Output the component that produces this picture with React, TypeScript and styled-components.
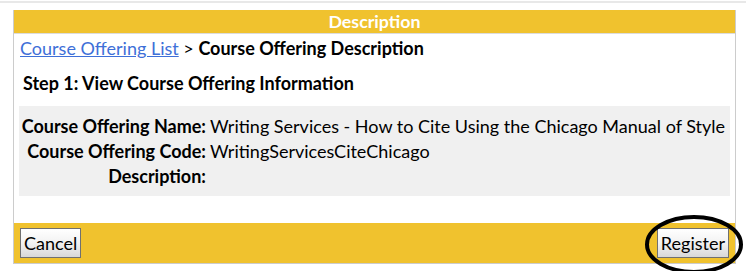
import React from "react";
import styled, { createGlobalStyle } from "styled-components";

const Global = createGlobalStyle`
  html, body { margin: 0; padding: 0; background: #fff; }
  body { font-family: Lato, "Open Sans", sans-serif; color: #000; }
`;

const Page = styled.div`
  width: 746px;
  height: 271px;
  border-top: 2px solid #e8e8e8;
  margin-top: 1px;
  padding: 7px 10px 0 13px;
  box-sizing: border-box;
  position: relative;
`;

const Panel = styled.div`
  width: 723px;
  border: 1px solid #cccccc;
  border-top: none;
  box-sizing: border-box;
  background: #fff;
`;

const Header = styled.div`
  background: #f0c22e;
  color: #fff;
  font-weight: 700;
  font-size: 17.8px;
  text-align: center;
  height: 23px;
  line-height: 23px;
  border-bottom: 1px solid #dcdcdc;
`;

const Body = styled.div`
  padding: 3px 5px 27px 5px;
`;

const Crumbs = styled.div`
  font-size: 18px;
  line-height: 23px;
  padding-left: 1px;
  a { color: #3e6fd8; text-decoration: underline; }
  b { font-weight: 700; }
`;

const Step = styled.h3`
  margin: 12px 0 0 4px;
  font-size: 18px;
  font-weight: 700;
  line-height: 23px;
`;

const InfoBox = styled.div`
  margin-top: 11px;
  background: #f0f0f0;
  padding: 8px 0 7px 0;
  display: grid;
  grid-template-columns: 187px 1fr;
  font-size: 18px;
  line-height: 25px;
`;

const Label = styled.div`
  font-weight: 700;
  text-align: right;
`;

const Value = styled.div`
  padding-left: 4px;
  white-space: nowrap;
`;

const Footer = styled.div`
  background: #f0c22e;
  height: 40px;
  display: flex;
  align-items: center;
  justify-content: space-between;
  padding: 0 6px;
`;

const Button = styled.button`
  font-family: Lato, sans-serif;
  font-size: 18px;
  height: 30px;
  padding: 0 3px;
  border: 1px solid #707070;
  background: linear-gradient(#ffffff, #f2f2f2 50%, #d8d8d8);
  color: #000;
`;

const Circle = styled.svg`
  position: absolute;
  left: 644px;
  top: 211px;
  width: 100px;
  height: 61px;
  pointer-events: none;
`;

export default function App() {
  return (
    <>
      <Global />
      <Page>
        <Panel>
          <Header>Description</Header>
          <Body>
            <Crumbs>
              <a href="#">Course Offering List</a> &gt; <b>Course Offering Description</b>
            </Crumbs>
            <Step>Step 1: View Course Offering Information</Step>
            <InfoBox>
              <Label>Course Offering Name:</Label>
              <Value>Writing Services - How to Cite Using the Chicago Manual of Style</Value>
              <Label>Course Offering Code:</Label>
              <Value>WritingServicesCiteChicago</Value>
              <Label>Description:</Label>
              <Value></Value>
            </InfoBox>
          </Body>
          <Footer>
            <Button>Cancel</Button>
            <Button>Register</Button>
          </Footer>
        </Panel>
        <Circle viewBox="0 0 100 61">
          <ellipse cx="50" cy="30.5" rx="47" ry="27.5" fill="none" stroke="#000" strokeWidth="4" />
        </Circle>
      </Page>
    </>
  );
}
